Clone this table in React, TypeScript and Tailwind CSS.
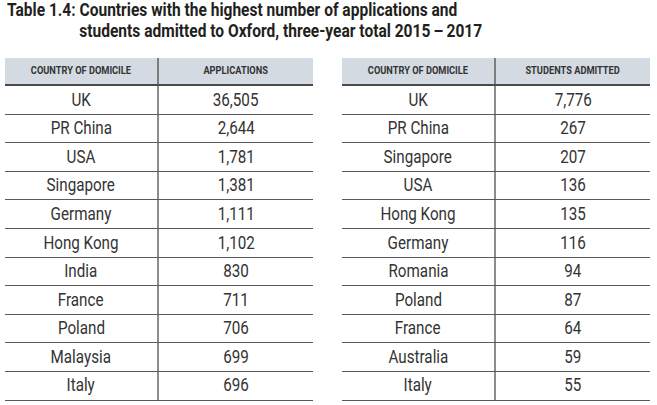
const applications = [
  ["UK", "36,505"],
  ["PR China", "2,644"],
  ["USA", "1,781"],
  ["Singapore", "1,381"],
  ["Germany", "1,111"],
  ["Hong Kong", "1,102"],
  ["India", "830"],
  ["France", "711"],
  ["Poland", "706"],
  ["Malaysia", "699"],
  ["Italy", "696"],
];

const admitted = [
  ["UK", "7,776"],
  ["PR China", "267"],
  ["Singapore", "207"],
  ["USA", "136"],
  ["Hong Kong", "135"],
  ["Germany", "116"],
  ["Romania", "94"],
  ["Poland", "87"],
  ["France", "64"],
  ["Australia", "59"],
  ["Italy", "55"],
];

const font = {
  fontFamily: 'Roboto, "Liberation Sans", sans-serif',
};

// the source uses a condensed face; squeeze the glyphs horizontally
const Narrow = ({ children, head }: { children: React.ReactNode; head?: boolean }) => (
  <span className={head ? "inline-block whitespace-nowrap scale-x-[0.88]" : "inline-block whitespace-nowrap scale-x-[0.8]"}>
    {children}
  </span>
);

const DataTable = ({ label, rows }: { label: string; rows: string[][] }) => {
  return (
    <div className="w-[308px] text-[#333333]">
      <div className="flex h-[28px] bg-[#d4dae2] border-b-2 border-[#4a4a4a] text-[10.5px] font-bold uppercase">
        <div className="w-[154px] flex items-center justify-center border-r-2 border-[#7d7d7d]">
          <Narrow head>Country of domicile</Narrow>
        </div>
        <div className="flex-1 flex items-center justify-center">
          <Narrow head>{label}</Narrow>
        </div>
      </div>
      {rows.map(([country, value]) => (
        <div key={country} className="flex h-[28.6px] border-b border-[#5a5a5a] text-[19px]">
          <div className="w-[154px] flex items-center justify-center border-r-2 border-[#8c8c8c]">
            <Narrow>{country}</Narrow>
          </div>
          <div className="flex-1 flex items-center justify-center">
            <Narrow>{value}</Narrow>
          </div>
        </div>
      ))}
    </div>
  );
};

const App = () => {
  return (
    <div className="w-[657px] h-[405px] bg-white overflow-hidden" style={font}>
      <div className="pl-[7px] text-[18.5px] leading-[20.5px] font-bold text-[#231f20]">
        <div className="origin-left scale-x-[0.84] whitespace-nowrap">
          <p>Table 1.4: Countries with the highest number of applications and</p>
          <p className="pl-[86px]">students admitted to Oxford, three-year total 2015{"\u2009–\u2009"}2017</p>
        </div>
      </div>
      <div className="flex gap-[29px] pl-[5px] mt-[17px]">
        <DataTable label="Applications" rows={applications} />
        <DataTable label="Students admitted" rows={admitted} />
      </div>
    </div>
  );
};

export default App;
